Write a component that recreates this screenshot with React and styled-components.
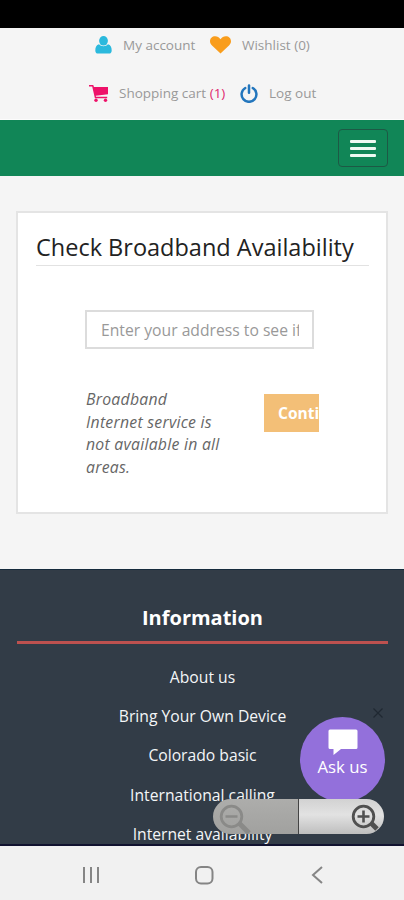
import React from 'react';
import styled, { createGlobalStyle } from 'styled-components';

const GlobalStyle = createGlobalStyle`
  * {
    box-sizing: border-box;
  }
  body {
    margin: 0;
    background: #f5f5f5;
    font-family: 'Open Sans', 'Noto Sans', sans-serif;
    overflow: hidden;
  }
`;

const Screen = styled.div`
  position: relative;
  display: flex;
  flex-direction: column;
  width: 404px;
  height: 900px;
  overflow: hidden;
`;

const StatusBar = styled.div`
  flex: 0 0 28px;
  background: #000;
`;

const TopLinks = styled.div`
  flex: 0 0 92px;
  border-bottom: 1px solid #fcfcfc;
  background: #f5f5f5;
`;

const LinkRow = styled.div`
  display: flex;
  align-items: center;
  height: ${(p) => p.$height}px;
  padding-top: ${(p) => p.$top || 0}px;
  padding-left: ${(p) => p.$left}px;
`;

const TopLink = styled.a`
  display: flex;
  align-items: center;
  width: ${(p) => p.$width}px;
  font-size: 13.5px;
  line-height: 18px;
  color: #999;
  white-space: pre;

  svg {
    flex: none;
    margin-right: ${(p) => p.$gap}px;
  }
`;

const CartCount = styled.span`
  color: #e0286f;
`;

const NavBar = styled.div`
  flex: 0 0 56px;
  display: flex;
  justify-content: flex-end;
  padding: 9px 16px 0 0;
  background: #118657;
`;

const MenuButton = styled.button`
  display: flex;
  flex-direction: column;
  align-items: center;
  justify-content: center;
  gap: 4px;
  width: 50px;
  height: 38px;
  padding: 0;
  border: 1px solid #1d5945;
  border-radius: 4px;
  background: transparent;
`;

const MenuLine = styled.span`
  width: 26px;
  height: 3px;
  border-radius: 1px;
  background: #eefaf2;
`;

const Main = styled.main`
  flex: 0 0 393px;
  padding: 35px 16px 0 16px;
`;

const Card = styled.section`
  height: 303px;
  padding: 18px 17px 0 18px;
  border: 2px solid #e4e4e4;
  background: #fff;
`;

const CardTitle = styled.h1`
  height: 35px;
  margin: 0;
  border-bottom: 1px solid #e2e2e2;
  font-size: 23.5px;
  font-weight: 400;
  line-height: 33px;
  color: #222;
  white-space: nowrap;
`;

const AddressField = styled.input`
  display: block;
  width: 229px;
  height: 39px;
  margin: 44px 0 0 49px;
  padding: 0 13px 0 14px;
  border: 2px solid #dcdcdc;
  border-radius: 0;
  background: #fff;
  font-family: inherit;
  font-size: 15.7px;
  outline: none;

  &::placeholder {
    color: #999;
    opacity: 1;
  }
`;

const FormRow = styled.div`
  display: flex;
  justify-content: space-between;
  align-items: flex-start;
  width: 233px;
  margin: 39px 0 0 50px;
`;

const Notice = styled.p`
  width: 138px;
  margin: 0;
  font-size: 15.8px;
  font-style: italic;
  line-height: 22.5px;
  letter-spacing: 0.25px;
  color: #666;
`;

const ContinueButton = styled.button`
  width: 55px;
  height: 38px;
  margin-top: 6px;
  padding: 0 0 0 14px;
  border: 0;
  background: #f3bf77;
  font-family: inherit;
  font-size: 15.5px;
  font-weight: 700;
  text-align: left;
  color: #fff;
  overflow: hidden;
  white-space: nowrap;
`;

const Footer = styled.footer`
  flex: 0 0 277px;
  padding: 32px 16px 0 17px;
  border-top: 1px solid #162b3c;
  border-bottom: 2px solid #11122f;
  background: #323c47;
  overflow: hidden;
`;

const FooterTitle = styled.h2`
  height: 42px;
  margin: 0;
  border-bottom: 3px solid #bd514f;
  font-size: 20px;
  font-weight: 700;
  line-height: 31px;
  text-align: center;
  color: #fff;
`;

const FooterLinks = styled.ul`
  margin: 13.5px 0 0;
  padding: 0;
  list-style: none;
`;

const FooterItem = styled.li`
  height: 39.4px;
  font-size: 15.7px;
  line-height: 39.4px;
  text-align: center;
  color: #f4f6f8;
`;

const AskBubble = styled.div`
  position: absolute;
  left: 300px;
  top: 717px;
  display: flex;
  flex-direction: column;
  align-items: center;
  width: 85px;
  height: 85px;
  padding-top: 12px;
  border-radius: 50%;
  background: #9370db;
  font-size: 16.8px;
  line-height: 22px;
  color: #fff;

  svg {
    flex: none;
  }
`;

const CloseIcon = styled.svg`
  position: absolute;
  left: 372px;
  top: 707px;
`;

const ZoomControls = styled.div`
  position: absolute;
  left: 213px;
  top: 799px;
  display: flex;
  width: 171px;
  height: 35px;
  border-radius: 18px;
  overflow: hidden;
`;

const ZoomOut = styled.div`
  width: 86px;
  padding-left: 5px;
  border-right: 1px solid #444;
  background: linear-gradient(#adadab, #a1a19f);
`;

const ZoomIn = styled.div`
  flex: 1;
  display: flex;
  justify-content: flex-end;
  background: linear-gradient(#d2d2d2, #e2e2e2 45%, #bebebe);
`;

const SystemBar = styled.div`
  flex: 0 0 54px;
  display: flex;
  align-items: center;
  gap: 94px;
  padding: 3px 0 0 82px;
  background: #f1f1f1;
`;

const UserIcon = () => (
  <svg width="17" height="18" viewBox="0 0 17 18" fill="#2bb9dd">
    <ellipse cx="8.5" cy="4.8" rx="4.4" ry="4.8" />
    <path d="M4 8.300C1.300 8.800.3 11.500.3 14.500c0 2 1 3.100 2.700 3.100h11c1.700 0 2.700-1.100 2.700-3.100 0-3-1-5.700-3.700-6.200C12 9.600 10.400 10.300 8.500 10.300S5 9.600 4 8.300Z" />
  </svg>
);

const HeartIcon = () => (
  <svg width="21" height="18" viewBox="0 0 21 18" fill="#f99d1c">
    <path d="M10.500 17.600 2 9.400C.8 8.300 0 7 0 5.300 0 2.300 2.200.3 5.200.3c2.200 0 3.900 1.200 5.300 2.900C11.900 1.500 13.600.3 15.800.3c3 0 5.200 2 5.200 5 0 1.700-.8 3-2 4.100Z" />
  </svg>
);

const CartIcon = () => (
  <svg width="20" height="17" viewBox="0 0 20 17" fill="#ee1169">
    <path d="M0 0h3.700c.6 0 .9.400 1 .900L4.900 2H19v7.300l-12.200 1.500.2 1h11.200v1.400H5.900L3.200 1.600H0Z" />
    <circle cx="7" cy="15.200" r="1.700" />
    <circle cx="16.500" cy="15.200" r="1.700" />
  </svg>
);

const PowerIcon = () => (
  <svg width="18" height="19" viewBox="0 0 18 19" fill="none" stroke="#2376bd" strokeWidth="2.500" strokeLinecap="round">
    <path d="M5.300 4A7.400 7.400 0 1 0 12.700 4" />
    <path d="M9 1.400v7.400" />
  </svg>
);

const ChatIcon = () => (
  <svg width="30" height="27" viewBox="0 0 30 27" fill="#fff">
    <path d="M2 .5h26a1.500 1.500 0 0 1 1.500 1.500v16.500A1.500 1.500 0 0 1 28 20H13l-7.500 6V20H2A1.500 1.500 0 0 1 .5 18.500V2A1.500 1.500 0 0 1 2 .5Z" />
  </svg>
);

const Magnifier = ({ color, plus }) => (
  <svg width="34" height="35" viewBox="0 0 34 35" fill="none" stroke={color}>
    <path d={plus ? 'm21 24 6 6' : 'm21 24 10 10'} strokeWidth="5" />
    <circle cx="13.500" cy="17.500" r="10.300" strokeWidth="2.800" />
    <path d={plus ? 'M7.500 17.500h12M13.500 11.500v12' : 'M7.500 17.500h12'} strokeWidth="2.600" />
  </svg>
);

const links = [
  { label: 'About us' },
  { label: 'Bring Your Own Device' },
  { label: 'Colorado basic' },
  { label: 'International calling' },
  { label: 'Internet availability' },
];

const App = () => {
  return (
    <Screen>
      <GlobalStyle />
      <StatusBar />
      <TopLinks>
        <LinkRow $height={34} $left={95}>
          <TopLink $width={115} $gap={11}>
            <UserIcon />
            My account
          </TopLink>
          <TopLink $width={110} $gap={11}>
            <HeartIcon />
            Wishlist (0)
          </TopLink>
        </LinkRow>
        <LinkRow $height={57} $top={5} $left={89}>
          <TopLink $width={151} $gap={10}>
            <CartIcon />
            Shopping cart <CartCount>(1)</CartCount>
          </TopLink>
          <TopLink $width={90} $gap={11}>
            <PowerIcon />
            Log out
          </TopLink>
        </LinkRow>
      </TopLinks>
      <NavBar>
        <MenuButton aria-label="Menu">
          <MenuLine />
          <MenuLine />
          <MenuLine />
        </MenuButton>
      </NavBar>
      <Main>
        <Card>
          <CardTitle>Check Broadband Availability</CardTitle>
          <AddressField placeholder="Enter your address to see if" />
          <FormRow>
            <Notice>Broadband Internet service is not available in all areas.</Notice>
            <ContinueButton>Conti</ContinueButton>
          </FormRow>
        </Card>
      </Main>
      <Footer>
        <FooterTitle>Information</FooterTitle>
        <FooterLinks>
          {links.map((item, key) => (
            <FooterItem key={key}>{item.label}</FooterItem>
          ))}
        </FooterLinks>
      </Footer>
      <SystemBar>
        <svg width="18" height="18" viewBox="0 0 18 18" stroke="#858585" strokeWidth="2">
          <path d="M2 1v16M9 1v16M16 1v16" />
        </svg>
        <svg width="20" height="20" viewBox="0 0 20 20" fill="none" stroke="#858585" strokeWidth="2">
          <rect x="2" y="2" width="16.500" height="16.500" rx="5" />
        </svg>
        <svg width="18" height="18" viewBox="0 0 18 18" fill="none" stroke="#858585" strokeWidth="2">
          <path d="M14 1 5 9l9 8" />
        </svg>
      </SystemBar>

      <CloseIcon width="12" height="12" viewBox="0 0 12 12" stroke="#1f2832" strokeWidth="1.200">
        <path d="m1.500 1.500 9 9M10.500 1.500l-9 9" />
      </CloseIcon>
      <AskBubble>
        <ChatIcon />
        Ask us
      </AskBubble>
      <ZoomControls>
        <ZoomOut>
          <Magnifier color="#8a8a88" />
        </ZoomOut>
        <ZoomIn>
          <Magnifier color="#505050" plus />
        </ZoomIn>
      </ZoomControls>
    </Screen>
  );
};

export default App;
